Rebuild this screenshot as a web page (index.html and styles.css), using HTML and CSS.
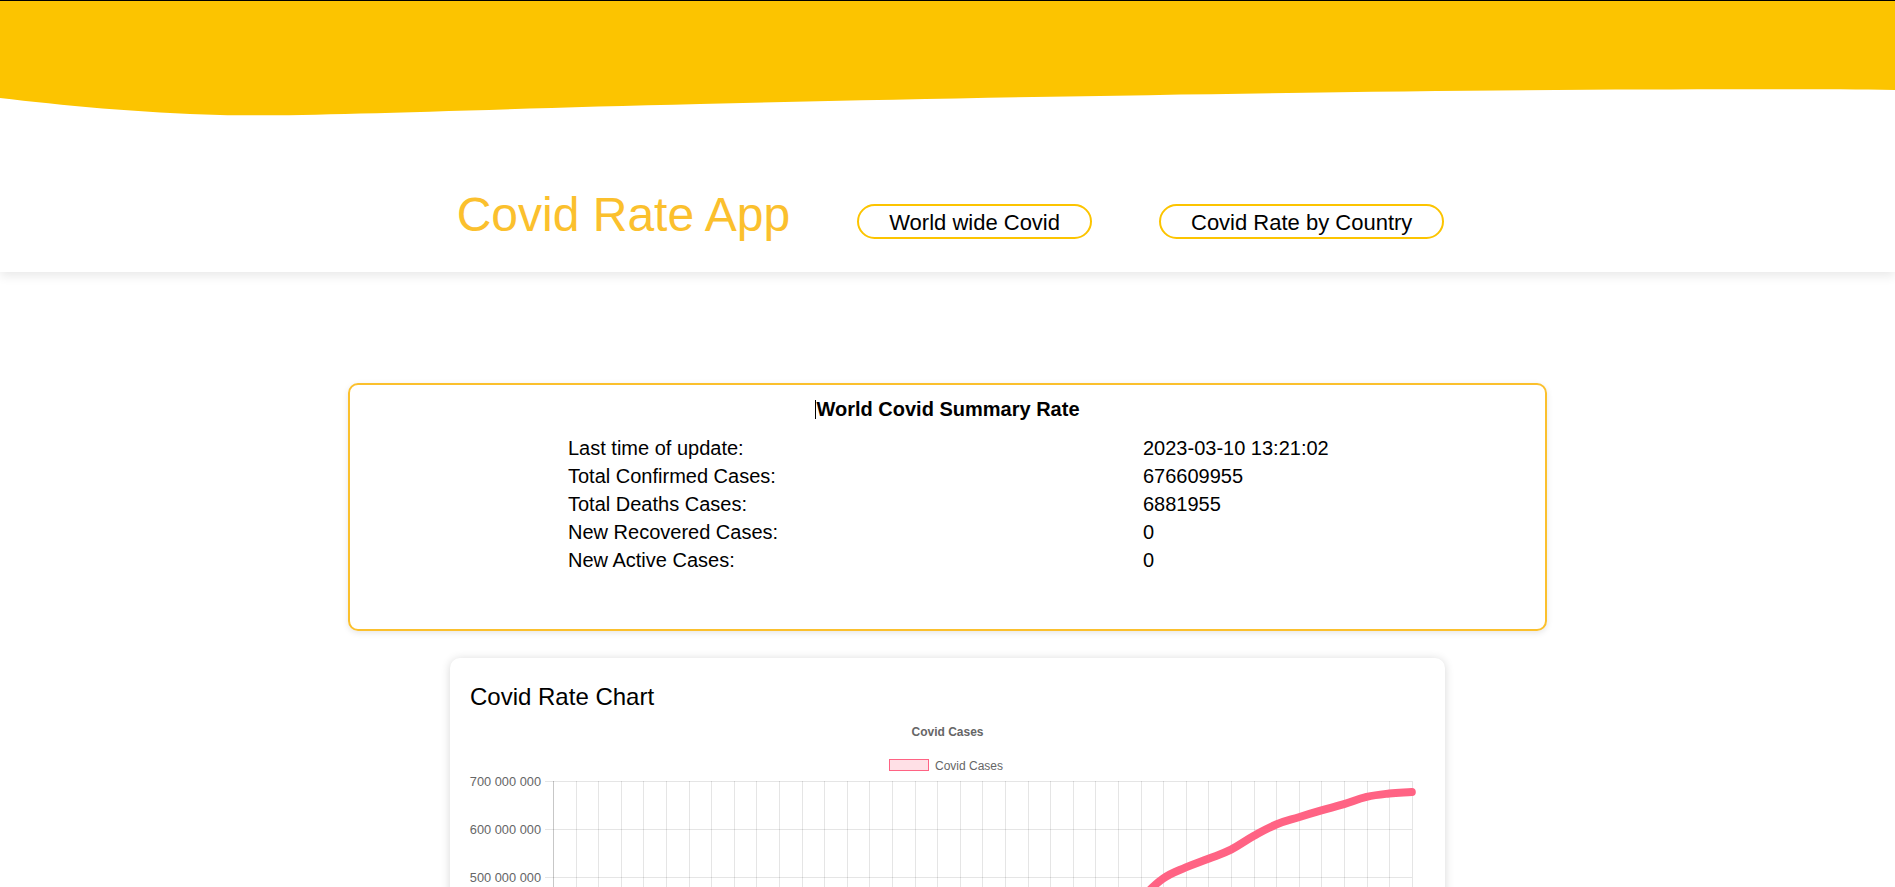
FILE: index.html
```html
<!DOCTYPE html>
<html lang="en">
<head>
<meta charset="utf-8">
<title>Covid Rate App</title>
<link rel="stylesheet" href="styles.css">
</head>
<body>
<header class="site-header">
  <svg class="wave" viewBox="0 0 1895 119" preserveAspectRatio="none" width="1895" height="119" aria-hidden="true">
    <path d="M0,0 H1895 V89 C1700,87 1300,89 700,103 C450,109 300,116 220,114 C140,112 60,104 0,97 Z" fill="#fcc400"/>
  </svg>
  <nav class="nav">
    <h1 class="brand">Covid Rate App</h1>
    <a class="nav-btn" href="#">World wide Covid</a>
    <a class="nav-btn" href="#">Covid Rate by Country</a>
  </nav>
</header>
<main class="main">
  <section class="summary-card">
    <h3 class="summary-title"><span class="caret"></span>World Covid Summary Rate</h3>
    <div class="summary-grid">
      <div class="label">Last time of update:</div><div class="value">2023-03-10 13:21:02</div>
      <div class="label">Total Confirmed Cases:</div><div class="value">676609955</div>
      <div class="label">Total Deaths Cases:</div><div class="value">6881955</div>
      <div class="label">New Recovered Cases:</div><div class="value">0</div>
      <div class="label">New Active Cases:</div><div class="value">0</div>
    </div>
  </section>
  <section class="chart-card">
    <h2 class="chart-heading">Covid Rate Chart</h2>
    <svg class="chart" width="995" height="480" viewBox="451 711 995 480">
      <text class="chart-title" x="948.5" y="736">Covid Cases</text>
      <rect class="legend-box" x="890.5" y="759.5" width="39" height="11"/>
      <text class="legend-text" x="936" y="769.5">Covid Cases</text>
      <g id="vgrid" class="grid"></g>
      <g class="grid">
        <line x1="546" x2="1413" y1="781.5" y2="781.5"/>
        <line x1="546" x2="1413" y1="829.5" y2="829.5"/>
        <line x1="546" x2="1413" y1="877.5" y2="877.5"/>
        <line x1="546" x2="1413" y1="926.5" y2="926.5"/>
        <line x1="546" x2="1413" y1="974.5" y2="974.5"/>
        <line x1="546" x2="1413" y1="1022.5" y2="1022.5"/>
        <line x1="546" x2="1413" y1="1070.5" y2="1070.5"/>
      </g>
      <line class="axis" x1="546" x2="1413" y1="1119.5" y2="1119.5"/>
      <line class="axis" x1="554.5" x2="554.5" y1="781" y2="1127"/>
      <g class="ylabels">
        <text x="542" y="785.5">700 000 000</text>
        <text x="542" y="833.8">600 000 000</text>
        <text x="542" y="882.1">500 000 000</text>
        <text x="542" y="930.4">400 000 000</text>
        <text x="542" y="978.7">300 000 000</text>
        <text x="542" y="1027">200 000 000</text>
        <text x="542" y="1075.3">100 000 000</text>
        <text x="542" y="1123.6">0</text>
      </g>
      <path id="line" class="data-line" d=""/>
    </svg>
  </section>
</main>
<script src="script.js"></script>
</body>
</html>
```

FILE: styles.css
```css
* { box-sizing: border-box; }
html, body { margin: 0; padding: 0; }
body {
  font-family: "Liberation Sans", Arial, sans-serif;
  background: #fff;
  color: #000;
}
.site-header {
  position: relative;
  z-index: 1;
  background: #fff;
  border-top: 1px solid #000;
  padding-bottom: 29px;
  box-shadow: 0 4px 10px rgba(0, 0, 0, 0.09);
}
.wave { display: block; width: 100%; height: 119px; }
.nav {
  display: flex;
  justify-content: center;
  align-items: flex-start;
  gap: 67px;
  margin-top: 67px;
  padding-left: 6px;
  height: 56px;
}
.brand {
  margin: 0;
  font-size: 48px;
  line-height: 56px;
  font-weight: normal;
  color: #fbc02d;
  white-space: nowrap;
}
.nav-btn {
  margin-top: 17px;
  border: 2px solid #fcc400;
  border-radius: 20px;
  padding: 4px 30px 2px;
  font-size: 22px;
  line-height: 25px;
  color: #000;
  text-decoration: none;
  white-space: nowrap;
}
.main { padding-top: 111px; }
.summary-card {
  width: 1199px;
  margin: 0 auto;
  border: 2px solid #fbc02d;
  border-radius: 10px;
  padding: 13px 0 55px;
  box-shadow: 0 2px 6px rgba(0, 0, 0, 0.1);
}
.summary-title {
  margin: 0;
  text-align: center;
  font-size: 20px;
  line-height: 23px;
  font-weight: bold;
}
.caret {
  display: inline-block;
  width: 0;
  height: 19px;
  border-left: 1px solid #000;
  vertical-align: -3px;
}
.summary-grid {
  display: grid;
  grid-template-columns: 575px auto;
  margin-top: 13px;
  padding-left: 218px;
  font-size: 20px;
  line-height: 28px;
}
.chart-card {
  width: 995px;
  margin: 27px auto 40px;
  background: #fff;
  border-radius: 10px;
  padding: 24px 20px 20px;
  box-shadow: 0 1px 10px rgba(0, 0, 0, 0.16);
}
.chart-heading {
  margin: 0;
  font-size: 24px;
  line-height: 29px;
  font-weight: normal;
}
.chart {
  display: block;
  margin: 0 -20px;
  font-family: "Liberation Sans", Arial, sans-serif;
}
.chart-title { font-size: 12px; font-weight: bold; fill: #666; text-anchor: middle; }
.legend-box { fill: rgba(255, 99, 132, 0.2); stroke: rgb(255, 99, 132); stroke-width: 1; }
.legend-text { font-size: 12px; fill: #666; }
.grid line { stroke: rgba(0, 0, 0, 0.1); stroke-width: 1; }
.axis { stroke: rgba(0, 0, 0, 0.22); stroke-width: 1; }
.ylabels text { font-size: 12.8px; fill: #666; text-anchor: end; }
.data-line {
  fill: none;
  stroke: rgb(255, 99, 132);
  stroke-width: 8;
  stroke-linecap: round;
  stroke-linejoin: round;
}
```

FILE: script.js
```js
(function () {
  var data = [0.01, 0.09, 0.8, 3.2, 6.1, 10.4, 17.6, 25.3, 33.9, 46, 63, 83, 103, 114, 129, 152, 171, 182, 198, 218, 234, 247, 262, 288, 360, 415, 456, 498, 521, 539, 558, 586, 610, 625, 639, 652, 667, 674, 677];
  var x0 = 554, dx = 22.6, yTop = 781, k = 0.483;
  var ns = 'http://www.w3.org/2000/svg';
  var grid = document.getElementById('vgrid');
  var i;
  for (i = 1; i < data.length; i++) {
    var l = document.createElementNS(ns, 'line');
    var gx = Math.round(x0 + dx * i) + 0.5;
    l.setAttribute('x1', gx);
    l.setAttribute('x2', gx);
    l.setAttribute('y1', yTop);
    l.setAttribute('y2', yTop + 700 * k + 8);
    grid.appendChild(l);
  }
  var pts = data.map(function (v, j) { return [x0 + dx * j, yTop + (700 - v) * k]; });
  var t = 0.4;
  function cps(j) {
    var p = pts[Math.max(j - 1, 0)], c = pts[j], n = pts[Math.min(j + 1, pts.length - 1)];
    var d01 = Math.sqrt(Math.pow(c[0] - p[0], 2) + Math.pow(c[1] - p[1], 2));
    var d12 = Math.sqrt(Math.pow(n[0] - c[0], 2) + Math.pow(n[1] - c[1], 2));
    var sum = d01 + d12;
    var s01 = sum ? d01 / sum : 0, s12 = sum ? d12 / sum : 0;
    var fa = t * s01, fb = t * s12;
    return {
      prev: [c[0] - fa * (n[0] - p[0]), c[1] - fa * (n[1] - p[1])],
      next: [c[0] + fb * (n[0] - p[0]), c[1] + fb * (n[1] - p[1])]
    };
  }
  function f(a) { return a[0].toFixed(2) + ',' + a[1].toFixed(2); }
  var d = 'M' + f(pts[0]);
  for (i = 0; i < pts.length - 1; i++) {
    d += ' C' + f(cps(i).next) + ' ' + f(cps(i + 1).prev) + ' ' + f(pts[i + 1]);
  }
  document.getElementById('line').setAttribute('d', d);
})();
```
